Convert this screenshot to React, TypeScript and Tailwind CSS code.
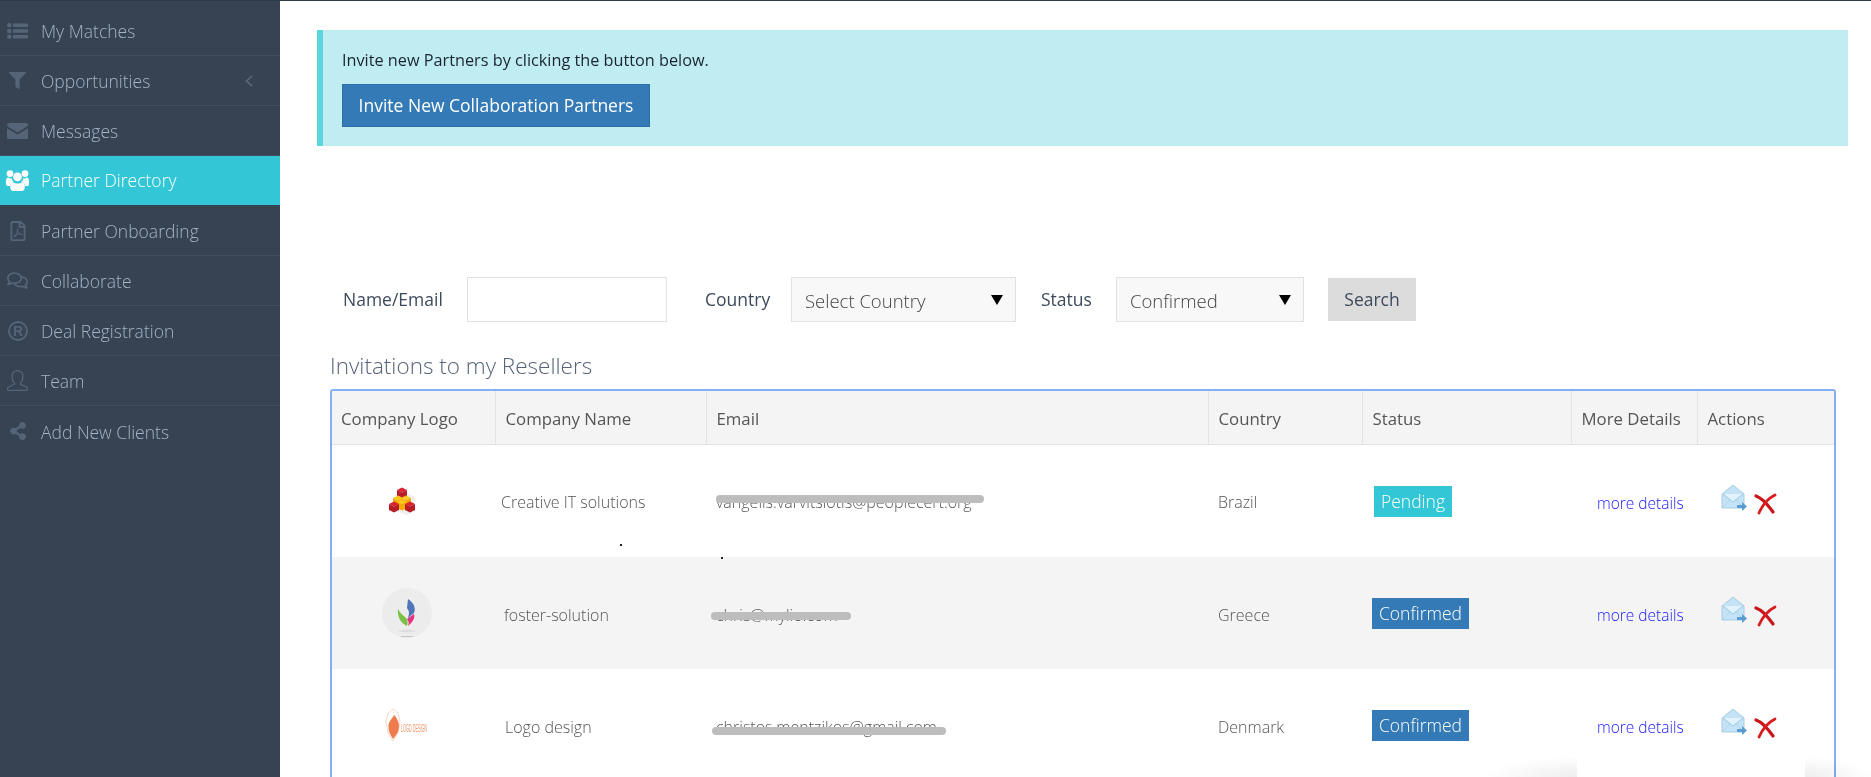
import React from "react";
import { FaFilter, FaRegFilePdf, FaRegComments, FaShareAlt } from "react-icons/fa";
import { SlUser } from "react-icons/sl";

function ListIcon() {
  return (
    <svg width="21" height="16" viewBox="0 0 21 16" fill="currentColor">
      <circle cx="2.3" cy="2.3" r="2.3" />
      <circle cx="2.3" cy="8" r="2.3" />
      <circle cx="2.3" cy="13.7" r="2.3" />
      <rect x="6" y="0.6" width="15" height="3.4" rx="0.6" />
      <rect x="6" y="6.3" width="15" height="3.4" rx="0.6" />
      <rect x="6" y="12" width="15" height="3.4" rx="0.6" />
    </svg>
  );
}

function MailIcon() {
  return (
    <svg width="21" height="16" viewBox="0 0 21 16" fill="currentColor">
      <path d="M1.5 0h18A1.5 1.5 0 0 1 21 1.5c0 1-.7 2-1.6 2.6L10.5 9.5 1.6 4.1C.7 3.5 0 2.5 0 1.5A1.5 1.5 0 0 1 1.5 0z" />
      <path d="M0 5.2L10.5 11.5 21 5.2v9.3a1.5 1.5 0 0 1-1.5 1.5h-18A1.5 1.5 0 0 1 0 14.5z" />
    </svg>
  );
}

function UsersIcon() {
  return (
    <svg width="23" height="21" viewBox="0 0 23 21" fill="currentColor">
      <circle cx="4" cy="3.6" r="3.4" />
      <circle cx="19" cy="3.6" r="3.4" />
      <circle cx="11.5" cy="6.8" r="4.4" />
      <path d="M0 11c0-2 1-3.4 2-3.4c1 .8 2.2 1 3.6.6c.3 1.6 1 2.8 2 3.6c-2 .6-3.2 2-3.6 4.2H1.5C.5 16 0 15 0 14z" />
      <path d="M23 11c0-2-1-3.4-2-3.4c-1 .8-2.2 1-3.6.6c-.3 1.6-1 2.8-2 3.6c2 .6 3.2 2 3.6 4.2h2.5c1 0 1.5-1 1.5-2z" />
      <path d="M7 12c1.2 1 2.800 1.5 4.5 1.5S14.800 13 16 12c1.800.4 2.800 2.200 2.800 4.800c0 2.600-1 4.200-3 4.200H7.200c-2 0-3-1.600-3-4.200C4.200 14.200 5.200 12.400 7 12z" />
    </svg>
  );
}

function RegisteredIcon() {
  return (
    <svg width="20" height="20" viewBox="0 0 20 20">
      <circle cx="10" cy="10" r="9" fill="none" stroke="currentColor" strokeWidth="2" />
      <text x="10" y="14.8" textAnchor="middle" fontSize="14" fontWeight="700" fontFamily="'Liberation Sans', sans-serif" fill="currentColor">R</text>
    </svg>
  );
}

const nav = [
  { label: "My Matches", icon: <ListIcon /> },
  { label: "Opportunities", icon: <FaFilter size={17} />, chevron: true },
  { label: "Messages", icon: <MailIcon /> },
  { label: "Partner Directory", icon: <UsersIcon />, active: true },
  { label: "Partner Onboarding", icon: <FaRegFilePdf size={20} /> },
  { label: "Collaborate", icon: <FaRegComments size={21} /> },
  { label: "Deal Registration", icon: <RegisteredIcon /> },
  { label: "Team", icon: <SlUser size={21} /> },
  { label: "Add New Clients", icon: <FaShareAlt size={18} />, last: true },
];

function Cubes() {
  const cube = (x: number, y: number, top: string, side: string) => (
    <g>
      <path d={`M${x} ${y}l5 -2.5l5 2.5l-5 2.5z`} fill={top} />
      <path d={`M${x} ${y}l5 2.5v6l-5 -2.5z`} fill={side} />
      <path d={`M${x + 10} ${y}l-5 2.5v6l5 -2.5z`} fill={side} />
    </g>
  );
  return (
    <svg width="28" height="30" viewBox="0 0 28 30" className="block">
      <path d="M20 7l7 3l-2 15l-6 3l-8-3z" fill="#eeeeee" />
      {cube(9, 3, "#d8232e", "#b81c26")}
      {cube(5, 11, "#ffc81e", "#f5a800")}
      {cube(13, 11, "#ffc81e", "#f5a800")}
      {cube(9, 15, "#ffc81e", "#f9a900")}
      {cube(1, 17, "#d8232e", "#b81c26")}
      {cube(17, 17, "#d8232e", "#b81c26")}
    </svg>
  );
}

function Flame() {
  return (
    <svg width="50" height="50" viewBox="0 0 50 50" className="block">
      <circle cx="25" cy="25" r="25" fill="#ececec" />
      <path d="M26 11c6 4 8 9 6 14l-6 5c1-4 2-6-1-10z" fill="#5076b8" />
      <path d="M16 21c2 4 5 6 8 9c2 2 2 5 1 8c-6-3-10-9-9-17z" fill="#7ac143" />
      <path d="M32 26c1 3 0 7-6 12c1-3 1-4-1-7z" fill="#e6337f" />
      <ellipse cx="25" cy="43" rx="9" ry="1.2" fill="#dddddd" />
      <rect x="19" y="48" width="12" height="1" fill="#c4c4c4" />
    </svg>
  );
}

function LogoDesign() {
  return (
    <svg width="42" height="34" viewBox="0 0 42 34" className="block overflow-visible">
      <path d="M7 1L12 5L14 14L12 25L7 33L2 25L0 14L2 5z" fill="none" stroke="#f8d8c8" strokeWidth="1" />
      <path d="M8 7C12 11 14 16 12.5 22C11.5 26 9 28 7 31C4 27 2 22 2.5 17C3 13 6 11 8 7z" fill="#ef7b4d" />
      <text x="15" y="24" fontSize="11" textLength="26" lengthAdjust="spacingAndGlyphs" fontFamily="'Liberation Sans', sans-serif" fill="#f0916a">LOGO DESIGN</text>
    </svg>
  );
}

function Actions() {
  return (
    <div className="flex items-start">
      <svg width="26" height="28" viewBox="0 0 26 28" className="mt-[-3px]">
        <path d="M1 10L12 1L23 10V24H1z" fill="#c4e3f7" stroke="#a9cbe4" strokeWidth="1" />
        <path d="M2 10L12 18L22 10" fill="#e1f2fc" stroke="#9cc6e2" strokeWidth="1" />
        <path d="M2 23L10 15M22 23L14 15" stroke="#b3d5ec" strokeWidth="1" />
        <path d="M16 21h5v-3l5 4.5l-5 4.5v-3h-5z" fill="#5c9bd1" />
      </svg>
      <svg width="23" height="22" viewBox="0 0 23 22" className="mt-[6px] ml-[7px]">
        <path d="M2 3C8 5 14 12 19 19" fill="none" stroke="#cb1619" strokeWidth="3.2" strokeLinecap="round" />
        <path d="M21 2C15 5 9 11 5 20" fill="none" stroke="#d81c20" strokeWidth="2.8" strokeLinecap="round" />
      </svg>
    </div>
  );
}

const rows = [
  { logo: <Cubes />, logoClass: "pl-[56px] pt-[2px]", name: "Creative IT solutions", namePad: "pl-[6px]", email: "vangelis.varvitsiotis@peoplecert.org", bar: "left-[0px] top-[-19px] w-[268px]", country: "Brazil", status: "Pending", badge: "mt-[2px]", h: "h-[113px]" },
  { logo: <Flame />, logoClass: "pl-[50px]", name: "foster-solution", namePad: "pl-[9px]", email: "chris@mylio.com", bar: "left-[-5px] top-[-15px] w-[140px]", country: "Greece", status: "Confirmed", badge: "", h: "h-[112px]" },
  { logo: <LogoDesign />, logoClass: "pl-[54px]", name: "Logo design", namePad: "pl-[10px]", email: "christos.mentzikos@gmail.com", bar: "left-[-4px] top-[-12px] w-[234px]", country: "Denmark", status: "Confirmed", badge: "", h: "h-[112px]" },
];

const headers = ["Company Logo", "Company Name", "Email", "Country", "Status", "More Details", "Actions"];

export default function App() {
  return (
    <div className="relative h-[777px] overflow-hidden bg-white text-[#555] font-['Open_Sans',sans-serif]">
      <div className="h-px bg-[#2a3a46]" />
      <div className="flex h-[776px]">
        <aside className="w-[280px] shrink-0 bg-[#374252] pt-[5px]">
          {nav.map((n) => (
            <div
              key={n.label}
              className={
                n.active
                  ? "flex h-[49px] mb-px items-center bg-[#33c6d6] text-white"
                  : n.last
                    ? "flex h-[50px] items-center text-[#a5b3c8]"
                    : "flex h-[50px] items-center border-b border-[#424d5d] text-[#a5b3c8]"
              }
            >
              <span className={n.active ? "flex w-[41px] justify-center pr-[6px] text-white" : "flex w-[41px] justify-center pr-[6px] text-[#566478]"}>{n.icon}</span>
              <span className={n.active ? "flex-1 text-[17.5px] font-light" : "flex-1 pt-[2px] text-[17.5px] font-light"}>{n.label}</span>
              {n.chevron && (
                <svg width="8" height="12" viewBox="0 0 8 12" className="mr-[27px]">
                  <path d="M7 1L1.5 6L7 11" fill="none" stroke="#5d6b80" strokeWidth="1.5" />
                </svg>
              )}
            </div>
          ))}
        </aside>
        <main className="min-w-0 flex-1 pt-[29px]">
          <div className="ml-[37px] mr-[23px] h-[116px] border-l-[6px] border-[#5bd5de] bg-[#bfedf2] pl-[19px] pt-[20px]">
            <p className="text-[16.25px] leading-[20px] text-[#1b2430]">Invite new Partners by clicking the button below.</p>
            <button className="mt-[14px] h-[43px] w-[308px] border border-[#2e6da4] bg-[#337ab7] text-[17.5px] text-white">Invite New Collaboration Partners</button>
          </div>

          <div className="ml-[63px] mt-[131px] flex h-[45px] items-center text-[17.5px] text-[#3d4a5c]">
            <span className="w-[124px]">Name/Email</span>
            <input aria-label="Name or email" className="h-[45px] w-[200px] border border-[#e2e2e2] bg-white" />
            <span className="ml-[38px] w-[86px]">Country</span>
            <div className="flex h-[45px] w-[225px] items-center justify-between border border-[#e2e2e2] bg-[#f8f8f8] pl-[13px] pr-[12px]">
              <span className="pt-[2px] text-[18.5px] font-light text-[#444]">Select Country</span>
              <svg width="12" height="12" viewBox="0 0 12 12"><path d="M0 1h12L6 11z" fill="#000" /></svg>
            </div>
            <span className="ml-[25px] w-[75px]">Status</span>
            <div className="flex h-[45px] w-[188px] items-center justify-between border border-[#e2e2e2] bg-[#f8f8f8] pl-[13px] pr-[12px]">
              <span className="pt-[2px] text-[18.5px] font-light text-[#444]">Confirmed</span>
              <svg width="12" height="12" viewBox="0 0 12 12"><path d="M0 1h12L6 11z" fill="#000" /></svg>
            </div>
            <button className="ml-[24px] h-[43px] w-[88px] bg-[#dcdcdc] text-[17.5px] text-[#3d4a5c]">Search</button>
          </div>

          <h2 className="ml-[50px] mt-[30px] text-[22.5px] font-light leading-[28px] text-[#56637a]">Invitations to my Resellers</h2>

          <div className="ml-[50px] mt-[9px] h-[400px] w-[1506px] overflow-hidden rounded-[3px] border-2 border-[#84aef5]">
            <table className="w-full table-fixed border-collapse">
              <colgroup>
                <col className="w-[163px]" />
                <col className="w-[211px]" />
                <col className="w-[502px]" />
                <col className="w-[154px]" />
                <col className="w-[209px]" />
                <col className="w-[126px]" />
                <col className="w-[137px]" />
              </colgroup>
              <thead>
                <tr className="h-[53px] border-b border-[#e3e3e3] bg-[#f4f4f4]">
                  {headers.map((h, i) => (
                    <th key={h} className={(i === 0 ? "pl-[9px] " : "border-l border-[#e3e3e3] pl-[10px] ") + "pt-[2px] text-left text-[16.8px] font-normal text-[#555]"}>{h}</th>
                  ))}
                </tr>
              </thead>
              <tbody>
                {rows.map((r, i) => (
                  <tr key={r.name} className={r.h + (i === 1 ? " bg-[#f4f4f4]" : " bg-white")}>
                    <td className={r.logoClass}>{r.logo}</td>
                    <td className={r.namePad + " pt-[3px] text-[16px] font-light text-[#555]"}>{r.name}</td>
                    <td className="pl-[10px] pt-[3px] text-[16px] font-light text-[#555]">
                      <span className="relative inline-block">{r.email}</span>
                      <span className="relative block h-0">
                        <span className={"absolute h-[8px] rounded-full bg-[#bdbdbd] " + r.bar} />
                      </span>
                    </td>
                    <td className="pl-[10px] pt-[3px] text-[16px] font-light text-[#555]">{r.country}</td>
                    <td className="pl-[10px]">
                      <span className={(r.status === "Pending" ? "ml-[2px] bg-[#33c6d6] px-[7px] " : "bg-[#337ab7] px-[7px] ") + r.badge + " inline-block h-[31px] text-[17.5px] font-light leading-[31px] text-white"}>{r.status}</span>
                    </td>
                    <td className="pl-[26px] pt-[5px] text-[15.5px] font-light text-[#1a1aff]">more details</td>
                    <td className="pl-[24px]"><Actions /></td>
                  </tr>
                ))}
              </tbody>
            </table>
          </div>
        </main>
      </div>
      <span className="absolute left-[620px] top-[544px] h-[2px] w-[2px] bg-[#222]" />
      <span className="absolute left-[721px] top-[557px] h-[2px] w-[2px] bg-[#222]" />
      <span className="absolute left-[1487px] top-[757px] h-[20px] w-[90px] mix-blend-multiply bg-[radial-gradient(ellipse_at_100%_100%,#eeeeee,transparent_72%)]" />
      <span className="absolute left-[1805px] top-[757px] h-[20px] w-[66px] mix-blend-multiply bg-[radial-gradient(ellipse_at_0%_100%,#eeeeee,transparent_72%)]" />
    </div>
  );
}
